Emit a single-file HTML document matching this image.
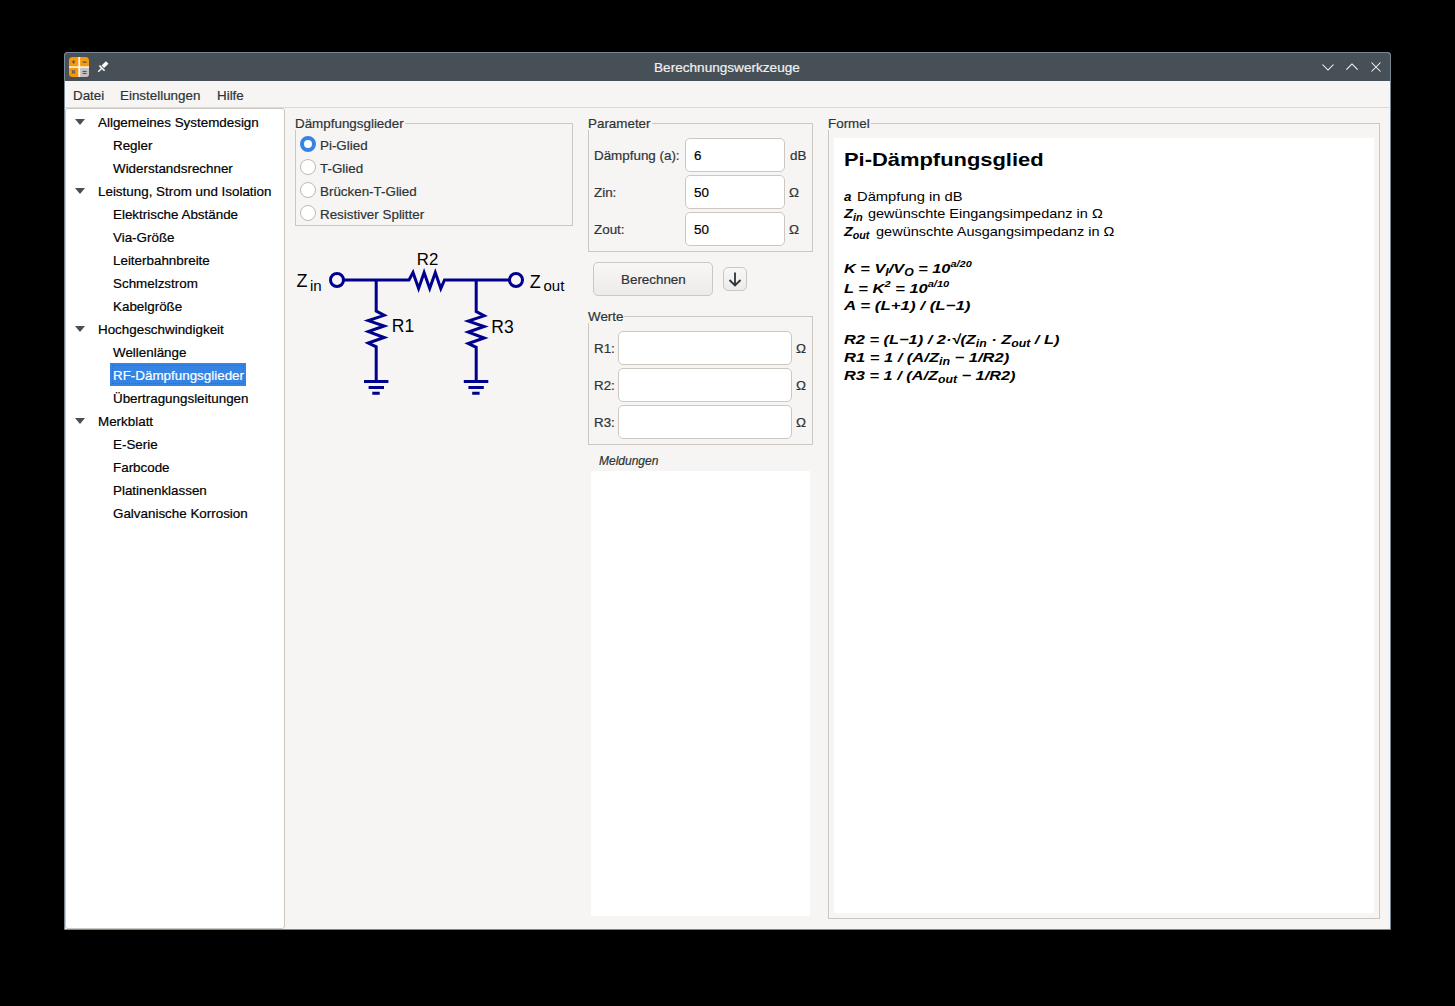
<!DOCTYPE html>
<html><head><meta charset="utf-8">
<style>
*{box-sizing:border-box;margin:0;padding:0}
html,body{width:1455px;height:1006px;overflow:hidden;background:#000}
body{position:relative;font-family:"Liberation Sans",sans-serif;font-size:13.4px;color:#2e3436}
.a{position:absolute}
.t{position:absolute;white-space:pre;line-height:1;-webkit-text-stroke:0.2px currentColor}
#win{left:64px;top:52px;width:1327px;height:878px;background:#f6f5f4;border:1px solid #778793;border-radius:3px 3px 0 0;overflow:hidden}
#title{left:0;top:0;width:1325px;height:28px;background:#475057}
#menusep{left:0;top:54px;width:1325px;height:1px;background:#dbdad7}
#tree{left:65px;top:108px;width:220px;height:821px;background:#fff;border:1px solid #cdc7c2;border-radius:3px}
.grp{position:absolute;border:1px solid #cdc7c2}
.inp{position:absolute;background:#fff;border:1px solid #cdc7c2;border-radius:5px}
.radio{position:absolute;width:16px;height:16px;border-radius:50%;background:#fff;border:1px solid #c0b9b2}
.tr{color:#000}
.arr{position:absolute;left:75px;width:0;height:0;border-left:5.5px solid transparent;border-right:5.5px solid transparent;border-top:6px solid #4d4d4d}
.lbl{background:#f6f5f4;padding-right:1px}
.btn{position:absolute;border:1px solid #cdc7c2;border-radius:5px;background:linear-gradient(#f8f7f6,#edebe9)}
.f{position:absolute;white-space:pre;line-height:1;color:#000;font-size:13.4px;transform-origin:0 0}
.bi{font-weight:bold;font-style:italic}
.sub{font-size:10px;position:relative;top:3px}
.sup{font-size:9px;position:relative;top:-6px}
</style></head><body>
<div id="win" class="a">
  <div id="title" class="a"></div>
  <div id="menusep" class="a"></div>
</div>

<!-- titlebar -->
<svg class="a" style="left:64px;top:52px" width="1327" height="29" viewBox="64 52 1327 29">
  <!-- app icon -->
  <rect x="69" y="57" width="20" height="20" rx="3.5" fill="#f7990f"/>
  <path d="M79 67 H89 V73.5 A3.5 3.5 0 0 1 85.5 77 H79 Z" fill="#c3c3c3"/>
  <rect x="78.3" y="57" width="1.8" height="20" fill="#fbf3ea"/>
  <rect x="69" y="66.3" width="20" height="1.6" fill="#fbf3ea"/>
  <g fill="#4f5558">
    <rect x="71.8" y="61.4" width="3.4" height="1.1"/>
    <rect x="73" y="60.2" width="1.1" height="3.4"/>
    <rect x="82.6" y="61.5" width="4" height="1.2"/>
    <rect x="82.6" y="70.9" width="4" height="1.1"/>
    <rect x="82.6" y="72.9" width="4" height="1.1"/>
  </g>
  <g stroke="#4f5558" stroke-width="1.1" fill="none">
    <path d="M71.8 70.2 L75.2 73.6 M75.2 70.2 L71.8 73.6"/>
  </g>
  <!-- pin -->
  <g stroke="#fff" fill="none" stroke-linecap="butt">
    <path d="M102.8 66.8 L107.2 62.4" stroke-width="3.6"/>
    <path d="M99.4 65.6 L104.6 70.8" stroke-width="1.5"/>
    <path d="M101.8 68.2 L98.2 71.8" stroke-width="1.3"/>
  </g>
  <!-- window buttons -->
  <g stroke="#fcfcfc" stroke-width="1.05" fill="none">
    <path d="M1322.5 64.5 L1328 70 L1333.5 64.5"/>
    <path d="M1346.4 69.6 L1352 64 L1357.6 69.6"/>
    <path d="M1371.5 62.5 L1380.5 71.5 M1380.5 62.5 L1371.5 71.5"/>
  </g>
</svg>
<div class="t" style="left:654px;top:61px;color:#eff0f1;font-size:13.6px">Berechnungswerkzeuge</div>

<!-- menu -->
<div class="t" style="left:73px;top:89px">Datei</div>
<div class="t" style="left:120px;top:89px">Einstellungen</div>
<div class="t" style="left:217px;top:89px">Hilfe</div>

<!-- tree -->
<div id="tree" class="a"></div>
<div class="a" style="left:110px;top:363px;width:136px;height:23px;background:#3584e4"></div>
<div class="a" style="left:112px;top:365px;width:132px;height:19px;border:1px dotted #2d6fc4"></div>
<div class="arr" style="top:119px"></div>
<div class="arr" style="top:188px"></div>
<div class="arr" style="top:326px"></div>
<div class="arr" style="top:418px"></div>
<div class="t tr" style="left:98px;top:116px">Allgemeines Systemdesign</div>
<div class="t tr" style="left:113px;top:139px">Regler</div>
<div class="t tr" style="left:113px;top:162px">Widerstandsrechner</div>
<div class="t tr" style="left:98px;top:185px">Leistung, Strom und Isolation</div>
<div class="t tr" style="left:113px;top:208px">Elektrische Abstände</div>
<div class="t tr" style="left:113px;top:231px">Via-Größe</div>
<div class="t tr" style="left:113px;top:254px">Leiterbahnbreite</div>
<div class="t tr" style="left:113px;top:277px">Schmelzstrom</div>
<div class="t tr" style="left:113px;top:300px">Kabelgröße</div>
<div class="t tr" style="left:98px;top:323px">Hochgeschwindigkeit</div>
<div class="t tr" style="left:113px;top:346px">Wellenlänge</div>
<div class="t" style="left:113px;top:369px;color:#fff">RF-Dämpfungsglieder</div>
<div class="t tr" style="left:113px;top:392px">Übertragungsleitungen</div>
<div class="t tr" style="left:98px;top:415px">Merkblatt</div>
<div class="t tr" style="left:113px;top:438px">E-Serie</div>
<div class="t tr" style="left:113px;top:461px">Farbcode</div>
<div class="t tr" style="left:113px;top:484px">Platinenklassen</div>
<div class="t tr" style="left:113px;top:507px">Galvanische Korrosion</div>

<!-- Dämpfungsglieder group -->
<div class="grp" style="left:295px;top:123px;width:278px;height:103px"></div>
<div class="t lbl" style="left:295px;top:117px">Dämpfungsglieder</div>
<div class="radio" style="left:300px;top:136px;border:4px solid #3584e4"></div>
<div class="radio" style="left:300px;top:159px"></div>
<div class="radio" style="left:300px;top:182px"></div>
<div class="radio" style="left:300px;top:205px"></div>
<div class="t" style="left:320px;top:139px">Pi-Glied</div>
<div class="t" style="left:320px;top:162px">T-Glied</div>
<div class="t" style="left:320px;top:185px">Brücken-T-Glied</div>
<div class="t" style="left:320px;top:208px">Resistiver Splitter</div>

<!-- circuit -->
<svg class="a" style="left:290px;top:240px" width="290" height="160" viewBox="290 240 290 160">
  <g stroke="#00008e" stroke-width="3" fill="none" stroke-linejoin="miter" stroke-miterlimit="10">
    <circle cx="337" cy="280" r="6.5"/>
    <circle cx="516" cy="280" r="6.5"/>
    <path d="M343.5 280 H409 L413 272.5 L418.6 288.5 L424.1 272.5 L429.7 288.5 L435.3 272.5 L440.8 288.5 L444.5 280 H509.5"/>
    <path d="M376.2 280 V311 L384.2 315.3 L368.3 320.6 L384.2 326 L368.3 331.6 L384.2 337.5 L368.3 343 L376.2 346.8 V381.5"/>
    <path d="M476.2 280 V311.5 L484.2 315.8 L468.3 321.1 L484.2 326.5 L468.3 332.1 L484.2 338 L468.3 343.5 L476.2 347.3 V381.5"/>
    <path d="M364 381.5 H388.4 M368.6 387.5 H384 M372.3 393.2 H379.7"/>
    <path d="M463.8 381.5 H488.3 M468.4 387.5 H483.8 M472.2 393.2 H479.6"/>
  </g>
  <g fill="#000" font-family="Liberation Sans">
    <text x="296.5" y="286.5" font-size="18">Z</text>
    <text x="310" y="290.5" font-size="15">in</text>
    <text x="529.8" y="287.7" font-size="18">Z</text>
    <text x="543.5" y="291.4" font-size="15">out</text>
    <text x="416.8" y="264.8" font-size="16.8">R2</text>
    <text x="391.8" y="332.2" font-size="17.5">R1</text>
    <text x="491.3" y="333.4" font-size="17.5">R3</text>
  </g>
</svg>

<!-- Parameter group -->
<div class="grp" style="left:588px;top:123px;width:225px;height:129px"></div>
<div class="t lbl" style="left:588px;top:117px">Parameter</div>
<div class="t" style="left:594px;top:149px">Dämpfung (a):</div>
<div class="t" style="left:594px;top:186px">Zin:</div>
<div class="t" style="left:594px;top:223px">Zout:</div>
<div class="inp" style="left:685px;top:138px;width:100px;height:34px"></div>
<div class="inp" style="left:685px;top:175px;width:100px;height:34px"></div>
<div class="inp" style="left:685px;top:212px;width:100px;height:34px"></div>
<div class="t tr" style="left:694px;top:149px">6</div>
<div class="t tr" style="left:694px;top:186px">50</div>
<div class="t tr" style="left:694px;top:223px">50</div>
<div class="t" style="left:790px;top:149px">dB</div>
<div class="t" style="left:789px;top:186px">Ω</div>
<div class="t" style="left:789px;top:223px">Ω</div>

<!-- buttons -->
<div class="btn" style="left:593px;top:262px;width:120px;height:34px"></div>
<div class="t" style="left:621px;top:273px">Berechnen</div>
<div class="btn" style="left:723px;top:267px;width:24px;height:24px"></div>
<svg class="a" style="left:723px;top:267px" width="24" height="24" viewBox="723 267 24 24">
  <g stroke="#2e3436" stroke-width="1.8" fill="none">
    <path d="M735 272.5 V285.5 M729.5 280 L735 285.5 L740.5 280"/>
  </g>
</svg>

<!-- Werte group -->
<div class="grp" style="left:588px;top:316px;width:225px;height:129px"></div>
<div class="t lbl" style="left:588px;top:310px">Werte</div>
<div class="t" style="left:594px;top:342px">R1:</div>
<div class="t" style="left:594px;top:379px">R2:</div>
<div class="t" style="left:594px;top:416px">R3:</div>
<div class="inp" style="left:618px;top:331px;width:174px;height:34px"></div>
<div class="inp" style="left:618px;top:368px;width:174px;height:34px"></div>
<div class="inp" style="left:618px;top:405px;width:174px;height:34px"></div>
<div class="t" style="left:796px;top:342px">Ω</div>
<div class="t" style="left:796px;top:379px">Ω</div>
<div class="t" style="left:796px;top:416px">Ω</div>

<!-- Meldungen -->
<div class="t" style="left:599px;top:455px;font-size:12px;font-style:italic">Meldungen</div>
<div class="a" style="left:591px;top:471px;width:219px;height:445px;background:#fff"></div>

<!-- Formel group -->
<div class="grp" style="left:828px;top:123px;width:552px;height:796px"></div>
<div class="t lbl" style="left:828px;top:117px">Formel</div>
<div class="a" style="left:834px;top:138px;width:540px;height:775px;background:#fff"></div>

<div class="f" id="ttl" style="left:844px;top:150px;font-size:19px;font-weight:bold;transform:scaleX(1.153)">Pi-Dämpfungsglied</div>
<div class="f bi" id="s1" style="left:844px;top:190px">a</div>
<div class="f" id="d1" style="left:857px;top:190px;transform:scaleX(1.1)">Dämpfung in dB</div>
<div class="f bi" id="s2" style="left:844px;top:207px;transform:scaleX(1.1)">Z<span class="sub">in</span></div>
<div class="f" id="d2" style="left:868px;top:207px;transform:scaleX(1.082)">gewünschte Eingangsimpedanz in Ω</div>
<div class="f bi" id="s3" style="left:844px;top:225px;transform:scaleX(1.07)">Z<span class="sub">out</span></div>
<div class="f" id="d3" style="left:876px;top:225px;transform:scaleX(1.084)">gewünschte Ausgangsimpedanz in Ω</div>
<div class="f bi" id="e1" style="left:844px;top:262px;transform:scaleX(1.22)">K = V<span class="sub">I</span>/V<span class="sub">O</span> = 10<span class="sup">a/20</span></div>
<div class="f bi" id="e2" style="left:844px;top:282px;transform:scaleX(1.23)">L = K<span class="sup">2</span> = 10<span class="sup">a/10</span></div>
<div class="f bi" id="e3" style="left:844px;top:299px;transform:scaleX(1.26)">A = (L+1) / (L−1)</div>
<div class="f bi" id="e4" style="left:844px;top:333px;transform:scaleX(1.223)">R2 = (L−1) / 2·√(Z<span class="sub">in</span> · Z<span class="sub">out</span> / L)</div>
<div class="f bi" id="e5" style="left:844px;top:351px;transform:scaleX(1.233)">R1 = 1 / (A/Z<span class="sub">in</span> − 1/R2)</div>
<div class="f bi" id="e6" style="left:844px;top:369px;transform:scaleX(1.22)">R3 = 1 / (A/Z<span class="sub">out</span> − 1/R2)</div>

</body></html>
